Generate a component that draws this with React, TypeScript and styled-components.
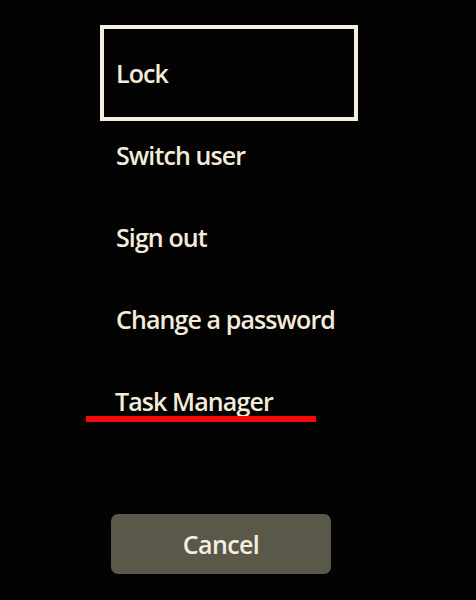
import React from "react";
import styled, { createGlobalStyle, css } from "styled-components";

const Global = createGlobalStyle`
  html, body { margin: 0; padding: 0; background: #030303; }
  body { font-family: "Open Sans", "Noto Sans", sans-serif; }
`;

const Screen = styled.div`
  width: 476px;
  height: 600px;
  box-sizing: border-box;
  padding: 32px 0 0 107px;
  background: #030303;
  overflow: hidden;
`;

const Menu = styled.ul`
  list-style: none;
  margin: 0;
  padding: 0;
  width: 244px;
  display: flex;
  flex-direction: column;
`;

const Item = styled.li<{ $focused?: boolean; $marked?: boolean }>`
  position: relative;
  height: 82px;
  box-sizing: border-box;
  display: flex;
  align-items: center;
  padding: 0 0 0 9px;
  color: #f4ecda;
  font-size: 25px;
  font-weight: 600;
  letter-spacing: -0.9px;
  ${(p) =>
    p.$focused &&
    css`
      outline: 4px solid #f6efdf;
      outline-offset: 3px;
    `}
  ${(p) =>
    p.$marked &&
    css`
      padding-left: 8px;
      &::after {
        content: "";
        position: absolute;
        left: -21px;
        width: 230px;
        top: 56px;
        height: 6px;
        background: #f40a0a;
      }
    `}
`;

const CancelButton = styled.button`
  margin: 72px 0 0 4px;
  width: 220px;
  height: 60px;
  border: none;
  border-radius: 7px;
  background: #5a5849;
  color: #f6efe0;
  font-family: "Open Sans", "Noto Sans", sans-serif;
  font-size: 25px;
  font-weight: 600;
  letter-spacing: -0.6px;
  display: flex;
  align-items: center;
  justify-content: center;
  padding: 0;
`;

export default function App() {
  return (
    <Screen>
      <Global />
      <Menu>
        <Item $focused>Lock</Item>
        <Item>Switch user</Item>
        <Item>Sign out</Item>
        <Item>Change a password</Item>
        <Item $marked>Task Manager</Item>
      </Menu>
      <CancelButton>Cancel</CancelButton>
    </Screen>
  );
}
